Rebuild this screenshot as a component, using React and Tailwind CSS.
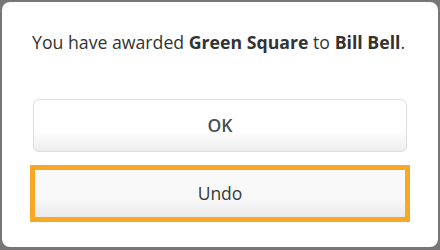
export default function App() {
  return (
    <div
      className="w-[440px] h-[250px] bg-[#777777] pt-[2px] pl-[2px] pr-[2px] pb-[3px]"
      style={{ fontFamily: '"Open Sans", sans-serif' }}
    >
      <div className="w-full h-full bg-white rounded-[8px] flex flex-col px-[31px] pt-[28px]">
        <p className="text-[17.7px] leading-[24px] text-[#333333] whitespace-nowrap -ml-[1px]">
          You have awarded <b className="font-bold">Green Square</b> to{" "}
          <b className="font-bold">Bill Bell</b>.
        </p>
        <button className="mt-[45px] h-[53px] w-full rounded-[6px] border border-[#dcdcdc] bg-gradient-to-b from-white from-60% to-[#ededed] text-[17.5px] font-semibold text-[#4a4f55]">
          OK
        </button>
        <button className="mt-[13px] -mx-[3px] h-[57px] border-[5px] border-[#f9a825] bg-gradient-to-b from-[#f9f9f9] from-60% to-[#e9e9e9] text-[17.5px] text-[#333a40]">
          Undo
        </button>
      </div>
    </div>
  );
}
